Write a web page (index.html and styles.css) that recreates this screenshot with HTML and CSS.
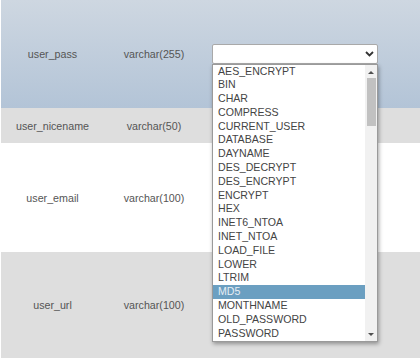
FILE: index.html
```html
<!DOCTYPE html>
<html>
<head>
  <title>Column functions</title>
  <link rel="stylesheet" href="styles.css">
</head>
<body>
<div class="columns-wrapper">
  <table class="columns">
    <tr class="row-active">
      <td class="col-name">user_pass</td>
      <td class="col-type">varchar(255)</td>
      <td class="col-func">
        <div class="func-select">
          <div class="func-box">
            <svg class="chevron" width="9" height="6" viewBox="0 0 9 6">
              <path d="M1 1 L4.5 4.5 L8 1" fill="none" stroke="#333" stroke-width="1.8"/>
            </svg>
          </div>
          <div class="func-list">
            <ul class="func-options">
              <li>AES_ENCRYPT</li>
              <li>BIN</li>
              <li>CHAR</li>
              <li>COMPRESS</li>
              <li>CURRENT_USER</li>
              <li>DATABASE</li>
              <li>DAYNAME</li>
              <li>DES_DECRYPT</li>
              <li>DES_ENCRYPT</li>
              <li>ENCRYPT</li>
              <li>HEX</li>
              <li>INET6_NTOA</li>
              <li>INET_NTOA</li>
              <li>LOAD_FILE</li>
              <li>LOWER</li>
              <li>LTRIM</li>
              <li class="selected">MD5</li>
              <li>MONTHNAME</li>
              <li>OLD_PASSWORD</li>
              <li>PASSWORD</li>
            </ul>
            <div class="scrollbar">
              <span class="arrow up"></span>
              <span class="thumb"></span>
              <span class="arrow down"></span>
            </div>
          </div>
        </div>
      </td>
    </tr>
    <tr class="row-odd row-short">
      <td class="col-name">user_nicename</td>
      <td class="col-type">varchar(50)</td>
      <td class="col-func"></td>
    </tr>
    <tr class="row-even row-tall">
      <td class="col-name">user_email</td>
      <td class="col-type">varchar(100)</td>
      <td class="col-func"></td>
    </tr>
    <tr class="row-odd row-url">
      <td class="col-name">user_url</td>
      <td class="col-type">varchar(100)</td>
      <td class="col-func"></td>
    </tr>
  </table>
</div>
</body>
</html>
```

FILE: styles.css
```css
html, body {
  margin: 0;
  padding: 0;
  background: #fff;
  overflow: hidden;
}

.columns-wrapper {
  padding-left: 1px;
}

.columns {
  border-collapse: collapse;
  width: 419px;
  table-layout: fixed;
  font-family: "Liberation Sans", Arial, sans-serif;
  font-size: 10.7px;
  color: #555;
}

.columns td {
  padding: 0;
  text-align: center;
  vertical-align: middle;
}

.col-name {
  width: 103px;
}

.col-type {
  width: 100px;
}

.columns td.col-func {
  text-align: left;
  padding-left: 8px;
}

.row-active {
  height: 108px;
  background: linear-gradient(#ced7e1, #b3c4d7);
}

.row-odd {
  background: #dedede;
}

.row-even {
  background: #fff;
}

.row-short {
  height: 35px;
}

.row-tall {
  height: 109px;
}

.row-url {
  height: 106px;
}

.func-select {
  position: relative;
  width: 166px;
  margin-top: -1px;
}

.func-box {
  height: 18px;
  border: 1px solid #a9a9a9;
  border-radius: 2px;
  background: #fff;
  display: flex;
  align-items: center;
  justify-content: flex-end;
  padding-right: 3px;
}

.func-list {
  position: absolute;
  top: 20px;
  left: 0;
  width: 164px;
  height: 276px;
  border: 1px solid #9a9a9a;
  background: #fff;
  box-shadow: 1px 2px 4px rgba(0, 0, 0, 0.35);
  display: flex;
  color: #444;
  font-size: 10.6px;
}

.func-options {
  list-style: none;
  margin: 0;
  padding: 0;
  flex: 1;
}

.func-options li {
  height: 13.8px;
  line-height: 13.8px;
  padding-left: 5px;
}

.func-options li.selected {
  background: #6b9fc1;
  color: #e8eef4;
}

.scrollbar {
  width: 12px;
  background: #f1f1f1;
  display: flex;
  flex-direction: column;
  align-items: center;
}

.scrollbar .thumb {
  width: 9px;
  height: 48px;
  margin-top: 4px;
  margin-left: 1px;
  background: #c1c1c1;
}

.scrollbar .arrow {
  width: 0;
  height: 0;
  border-left: 3px solid transparent;
  border-right: 3px solid transparent;
}

.scrollbar .arrow.up {
  margin-top: 6px;
  border-bottom: 3px solid #505050;
}

.scrollbar .arrow.down {
  margin-top: auto;
  margin-bottom: 5px;
  border-top: 3px solid #505050;
}
```
